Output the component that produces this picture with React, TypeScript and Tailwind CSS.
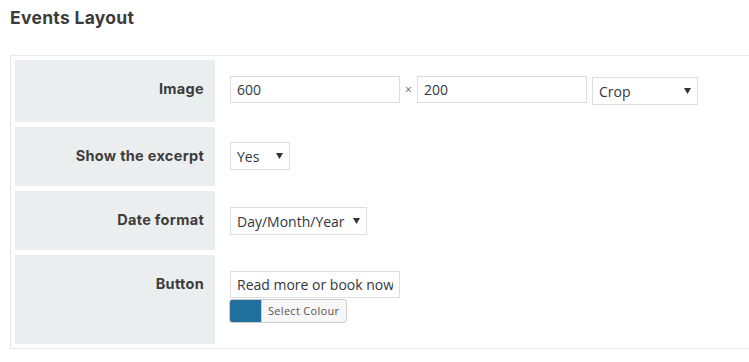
const labelFont = { fontFamily: "Inter, 'Noto Sans', sans-serif" };

function Caret() {
  return (
    <svg
      className="pointer-events-none absolute right-[7px] top-1/2 -translate-y-1/2"
      width="7"
      height="6"
      viewBox="0 0 7 6"
    >
      <path d="M0 0h7L3.5 6z" fill="#333" />
    </svg>
  );
}

function FakeSelect({ value, width }: { value: string; width: string }) {
  return (
    <div className={`relative ${width}`}>
      <select
        defaultValue={value}
        className="h-[28px] w-full appearance-none border border-[#dddddd] bg-white pl-[6px] pr-5 text-[14px] text-[#32373c] outline-none"
      >
        <option>{value}</option>
      </select>
      <Caret />
    </div>
  );
}

function Label({ children }: { children: React.ReactNode }) {
  return (
    <div
      className="bg-[#ebeeee] pr-[11px] pt-[20px] text-right text-[14.5px] font-bold leading-[18px] tracking-[0.3px] text-[#3c3c3c]"
      style={labelFont}
    >
      {children}
    </div>
  );
}

export default function App() {
  return (
    <div
      className="h-[362px] w-[749px] overflow-hidden bg-white"
      style={{ fontFamily: "'Open Sans', sans-serif" }}
    >
      <h2
        className="pl-[10px] pt-[6px] text-[17.5px] font-bold leading-[24px] tracking-[0.3px] text-[#3c3c3c]"
        style={labelFont}
      >
        Events Layout
      </h2>

      <div className="ml-[10px] mt-[25px] w-[745px] border border-[#e8e8e8]">
        <div className="grid grid-cols-[200px_1fr] grid-rows-[62px_59px_59px_89px] gap-[5px] p-[4px]">
          <Label>Image</Label>
          <div className="flex items-start pl-[10px] pt-[16px]">
            <input
              defaultValue="600"
              className="h-[27px] w-[170px] border border-[#dddddd] px-[6px] text-[14px] text-[#32373c] outline-none"
            />
            <span className="w-[17px] text-center text-[12px] leading-[27px] text-[#666]">×</span>
            <input
              defaultValue="200"
              className="h-[27px] w-[170px] border border-[#dddddd] px-[6px] text-[14px] text-[#32373c] outline-none"
            />
            <div className="ml-[5px] mt-[1px]">
              <FakeSelect value="Crop" width="w-[106px]" />
            </div>
          </div>

          <Label>Show the excerpt</Label>
          <div className="pl-[10px] pt-[15px]">
            <FakeSelect value="Yes" width="w-[60px]" />
          </div>

          <Label>Date format</Label>
          <div className="pl-[10px] pt-[16px]">
            <FakeSelect value="Day/Month/Year" width="w-[137px]" />
          </div>

          <Label>Button</Label>
          <div className="flex flex-col items-start gap-[1px] pl-[10px] pt-[16px]">
            <input
              defaultValue="Read more or book now"
              className="h-[27px] w-[170px] border border-[#dddddd] px-[6px] text-[14px] text-[#32373c] outline-none"
            />
            <button className="-ml-[1px] flex h-[24px] items-stretch overflow-hidden rounded-[3px] border border-[#cccccc] bg-[#f7f7f7]">
              <span className="w-[31px] bg-[#21709e]" />
              <span className="flex items-center border-l border-[#cccccc] pl-[6px] pr-[7px] text-[11px] tracking-[0.3px] text-[#555]">
                Select Colour
              </span>
            </button>
          </div>
        </div>
      </div>
    </div>
  );
}
